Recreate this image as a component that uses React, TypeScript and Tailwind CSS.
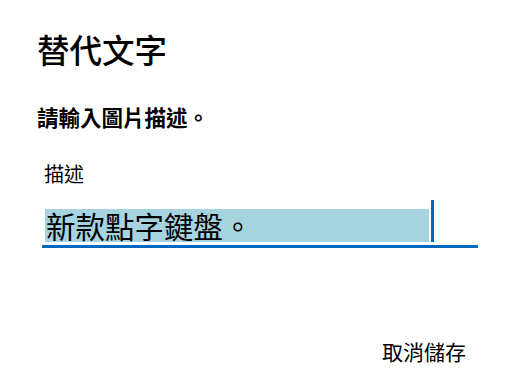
import React from "react";

export default function App() {
  const font = { fontFamily: '"Noto Sans CJK TC", "Noto Sans", sans-serif' };
  return (
    <div className="w-[520px] h-[380px] bg-white text-black flex flex-col" style={font}>
      <div className="pl-[37px] pt-[29px] text-[32.5px] leading-[40px] font-medium">替代文字</div>
      <div className="pl-[37px] mt-[34px] text-[21.5px] leading-[28px] font-bold">請輸入圖片描述。</div>
      <div className="pl-[44px] mt-[30px] text-[20px] leading-[26px]">描述</div>
      <div className="ml-[42px] mt-[13px] w-[436px] h-[48px] border-b-[3px] border-[#0067c0] flex items-end pb-[3px] pl-[3px]">
        <div className="w-[384px] h-[33px] bg-[#a6d3e0] pl-[1px] text-[29.5px] leading-[33px] whitespace-nowrap">新款點字鍵盤。</div>
        <div className="ml-[2px] w-[3px] h-[42px] bg-[#0067c0]"></div>
      </div>
      <div className="flex justify-end pr-[54px] mt-[89px] text-[21px] leading-[28px]">
        <button className="bg-transparent p-0">取消</button>
        <button className="bg-transparent p-0">儲存</button>
      </div>
    </div>
  );
}
